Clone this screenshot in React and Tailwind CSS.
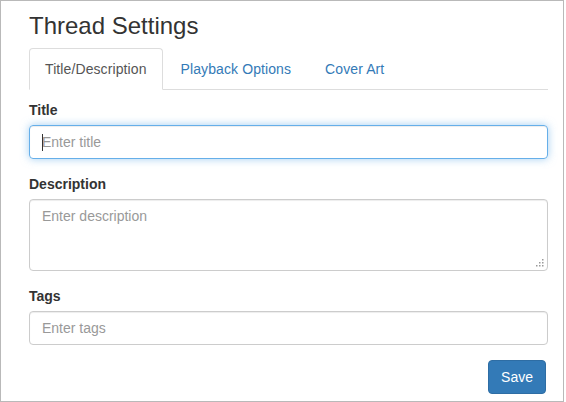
import React from "react";

export default function App() {
  const font = { fontFamily: '"Liberation Sans", Arial, sans-serif' };
  return (
    <div className="w-[566px] h-[402px] bg-white" style={font}>
      <div className="w-[564px] h-[402px] border border-[#b9b9b9] pl-[28px] pr-[15px] text-[14px] text-[#333] leading-[20px]">
        <h3 className="text-[24px] leading-[26.4px] font-normal text-[#333] pt-[12px] mb-[9px]">Thread Settings</h3>
        <ul className="flex border-b border-[#ddd] h-[42px]">
          <li className="mr-[2px] -mb-px">
            <a className="block px-[15px] py-[10px] border border-[#ddd] border-b-white rounded-t-[4px] bg-white text-[#555] h-[42px] tracking-[0.1px]">
              Title/Description
            </a>
          </li>
          <li className="mr-[2px] -mb-px">
            <a className="block px-[15px] py-[10px] border border-transparent text-[#337ab7] h-[42px] tracking-[0.1px]">Playback Options</a>
          </li>
          <li className="mr-[2px] -mb-px">
            <a className="block px-[15px] py-[10px] border border-transparent text-[#337ab7] h-[42px] tracking-[0.1px]">Cover Art</a>
          </li>
        </ul>
        <div className="pt-[10px]">
          <div className="mb-[15px] flex flex-col">
            <label className="font-bold mb-[5px] leading-[20px]">Title</label>
            <div className="relative">
              <input
                type="text"
                placeholder="Enter title"
                className="block w-full h-[34px] px-[12px] py-[6px] border border-[#66afe9] rounded-[4px] text-[14px] text-[#555] placeholder:text-[#999] outline-none shadow-[inset_0_1px_1px_rgba(0,0,0,0.075),0_0_8px_rgba(102,175,233,0.6)]"
                style={font}
              />
              <span className="absolute left-[13px] top-[9px] w-px h-[17px] bg-[#333]" />
            </div>
          </div>
          <div className="mb-[15px] flex flex-col">
            <label className="font-bold mb-[5px] leading-[20px]">Description</label>
            <div className="relative">
              <textarea
                rows={3}
                placeholder="Enter description"
                className="block w-full h-[72px] px-[12px] py-[6px] border border-[#ccc] rounded-[4px] text-[14px] text-[#555] placeholder:text-[#999] outline-none resize-none shadow-[inset_0_1px_1px_rgba(0,0,0,0.075)] leading-[20px]"
                style={font}
              />
              <svg className="absolute right-[4px] bottom-[4px]" width="8" height="8" viewBox="0 0 8 8">
                <g fill="#9a9a9a">
                  <rect x="6" y="0" width="1.5" height="1.5" />
                  <rect x="3" y="3" width="1.5" height="1.5" />
                  <rect x="6" y="3" width="1.5" height="1.5" />
                  <rect x="0" y="6" width="1.5" height="1.5" />
                  <rect x="3" y="6" width="1.5" height="1.5" />
                  <rect x="6" y="6" width="1.5" height="1.5" />
                </g>
              </svg>
            </div>
          </div>
          <div className="mb-[15px] flex flex-col">
            <label className="font-bold mb-[5px] leading-[20px]">Tags</label>
            <input
              type="text"
              placeholder="Enter tags"
              className="block w-full h-[34px] px-[12px] py-[6px] border border-[#ccc] rounded-[4px] text-[14px] text-[#555] placeholder:text-[#999] outline-none shadow-[inset_0_1px_1px_rgba(0,0,0,0.075)]"
              style={font}
            />
          </div>
          <div className="flex justify-end pr-[2px]">
            <button
              className="h-[34px] px-[12px] py-[6px] bg-[#337ab7] border border-[#2e6da4] rounded-[4px] text-white text-[14px] leading-[20px]"
              style={font}
            >
              Save
            </button>
          </div>
        </div>
      </div>
    </div>
  );
}
